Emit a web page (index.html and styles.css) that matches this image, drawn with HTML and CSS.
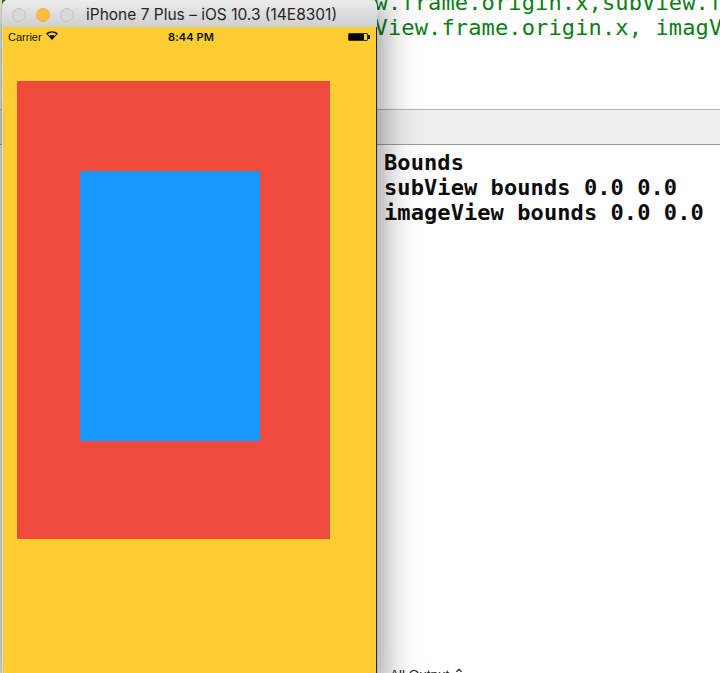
FILE: index.html
```html
<!DOCTYPE html>
<html lang="en">
<head>
<meta charset="utf-8">
<title>iPhone 7 Plus Simulator</title>
<link rel="stylesheet" href="styles.css">
</head>
<body>
<div class="desktop">
  <main class="xcode">
    <pre class="code">print("subView frame\(subView.frame.origin.x,subView.frame.origin.y)")
print("imageView frame\(imagView.frame.origin.x, imagView.frame.origin.y)")
print("Bounds")
print("subView")
print("imageView")</pre>
    <div class="debug-bar"></div>
    <div class="console">
      <pre class="console-text">Bounds
subView bounds 0.0 0.0
imageView bounds 0.0 0.0</pre>
      <div class="console-filter">All Output ⌃</div>
    </div>
  </main>
  <section class="simulator">
    <header class="titlebar">
      <div class="lights">
        <i class="light"></i>
        <i class="light light-active"></i>
        <i class="light"></i>
      </div>
      <div class="window-title">iPhone 7 Plus – iOS 10.3 (14E8301)</div>
    </header>
    <div class="screen">
      <div class="statusbar">
        <div class="carrier">Carrier
          <svg class="wifi" width="12" height="9" viewBox="0 0 12 9"><path d="M6 9 L0 2.6 C3.4 -.6 8.6 -.6 12 2.6 Z M6 7.4 L10.3 2.9 C7.6 .9 4.4 .9 1.7 2.9 Z" fill="#111" fill-rule="evenodd"/><path d="M6 8.2 L3 5 C4.8 3.6 7.2 3.6 9 5 Z" fill="#111"/></svg>
        </div>
        <div class="clock">8:44 PM</div>
        <div class="battery"><b class="battery-fill"></b><u class="battery-tip"></u></div>
      </div>
      <div class="red-view">
        <div class="blue-view"></div>
      </div>
    </div>
  </section>
</div>
</body>
</html>
```
FILE: styles.css
```css
* { box-sizing: border-box; }
html, body { margin: 0; height: 100%; background: #fff; overflow: hidden; }
.desktop { position: relative; width: 720px; height: 673px; overflow: hidden; }
.xcode { display: flex; flex-direction: column; height: 100%; }
.code {
  flex: 0 0 119px;
  margin: -10px 0 0;
  overflow: hidden;
  font: 22px/25px "DejaVu Sans Mono", monospace;
  letter-spacing: .13px;
  color: #0b7d16;
  white-space: pre;
}
.debug-bar {
  flex: 0 0 36px;
  background: #eeeeee;
  border-top: 1px solid #b4b4b4;
  border-bottom: 1px solid #9c9c9c;
}
.console { position: relative; flex: 1; background: #fff; padding: 5px 0 0 384px; }
.console-text {
  margin: 0;
  font: bold 22px/25px "DejaVu Sans Mono", monospace;
  letter-spacing: .08px;
  color: #0c0c0c;
}
.console-filter {
  position: absolute;
  left: 390px;
  top: 522px;
  font: 13.5px/16px "Liberation Sans", sans-serif;
  color: #222;
}
.simulator {
  position: absolute;
  left: 2px;
  top: 0;
  width: 375px;
  height: 700px;
  border-radius: 6px 6px 0 0;
  box-shadow: 0 0 40px rgba(0, 0, 0, .55);
  display: flex;
  flex-direction: column;
}
.titlebar {
  flex: 0 0 27px;
  display: flex;
  align-items: center;
  padding-top: 2px;
  background: linear-gradient(#ecebec, #d0cfd1);
  border-radius: 6px 6px 0 0;
}
.lights { display: flex; gap: 10px; padding-left: 10px; }
.light {
  width: 14px;
  height: 14px;
  border-radius: 50%;
  background: #d9d8d9;
  border: 1px solid #c5c4c5;
}
.light-active { background: #fdbc40; border-color: #f2b03a; }
.window-title {
  margin-left: 12px;
  font: 15.5px/20px "Inter", "Liberation Sans", sans-serif;
  color: #262626;
  white-space: nowrap;
}
.screen {
  flex: 1;
  background: #fecd32;
  border-left: 1px solid #d8d8d8;
  border-right: 1px solid #222;
  padding: 54px 0 0 14px;
  position: relative;
}
.statusbar {
  position: absolute;
  left: 0;
  right: 0;
  top: 0;
  height: 20px;
  display: flex;
  align-items: center;
  justify-content: center;
  font: 11px/14px "Liberation Sans", sans-serif;
  color: #111;
}
.carrier { position: absolute; left: 5px; top: 3px; display: flex; align-items: center; gap: 4px; }
.wifi { margin-top: -3px; }
.clock { font: 600 11px/14px "Inter", sans-serif; letter-spacing: .1px; margin-left: 3px; }
.battery {
  position: absolute;
  left: 345px;
  top: 6px;
  width: 20px;
  height: 8px;
  border: 1px solid #3a2f10;
  border-radius: 1px;
}
.battery-fill { display: block; width: 15px; height: 6px; background: #050505; }
.battery-tip { position: absolute; left: 19px; top: 1px; width: 2px; height: 4px; background: #111; }
.red-view {
  width: 312.5px;
  height: 458px;
  background: #ee4b3c;
  padding: 90px 0 0 63px;
}
.blue-view { width: 180px; height: 270px; background: #1898fc; }
```
